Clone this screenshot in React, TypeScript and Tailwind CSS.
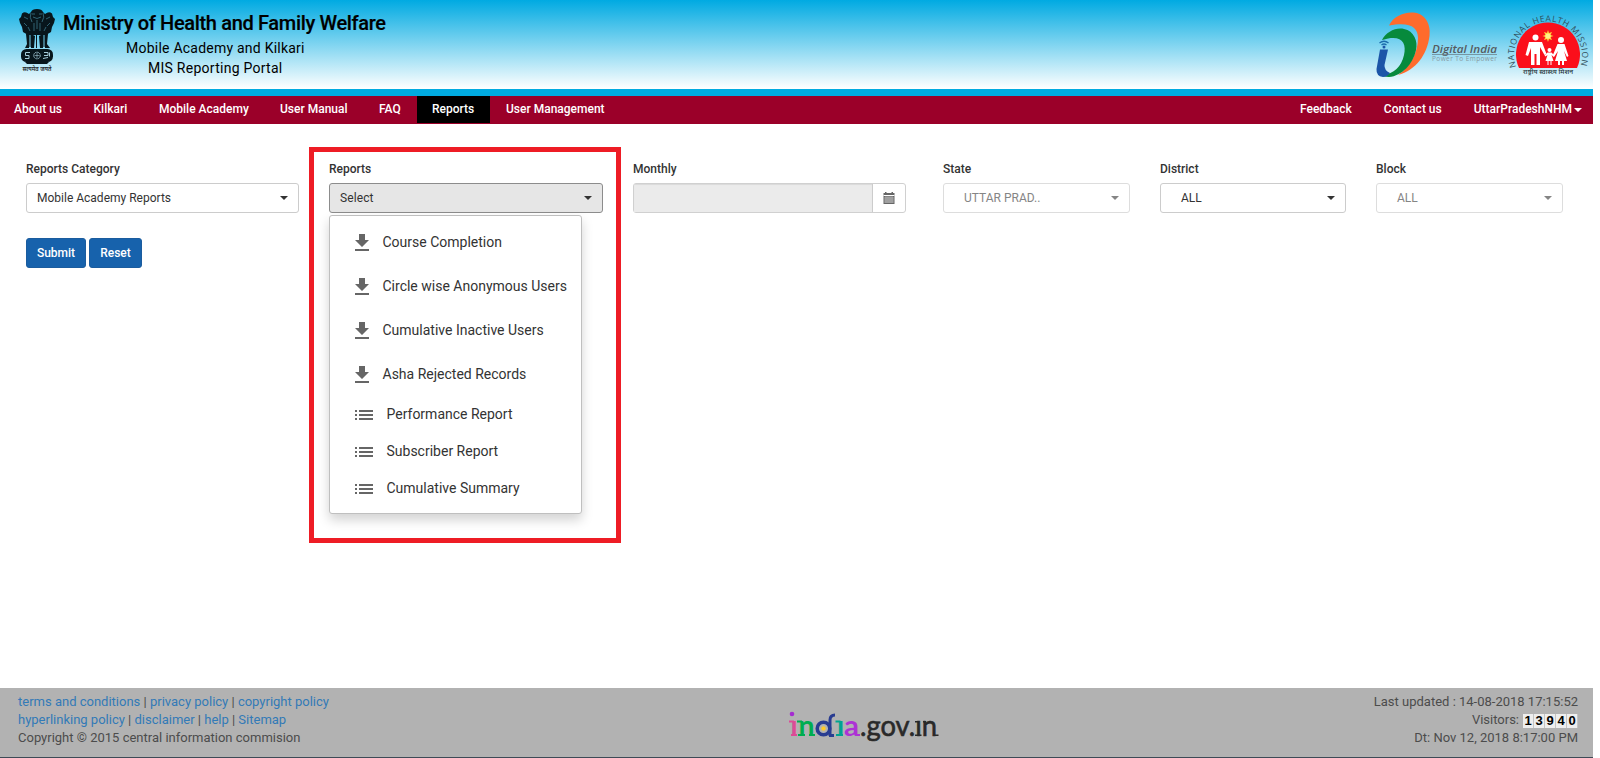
import React from "react";
import { MdGetApp, MdList } from "react-icons/md";

function Emblem() {
  return (
    <svg width="38" height="66" viewBox="0 0 38 66" className="shrink-0">
      <g fill="#08161c">
        <path d="M13 3 Q14 0 19 0 Q24 0 25 3 L27 5 Q31 2 34 4.500 L35 8 L37 10 L36 14 L34 18 L33 23 L28 26 L10 26 L5 23 L4 18 L2 14 L1 10 L3 8 L4 4.500 Q7 2 11 5Z" />
        <path d="M8 25 L11 25 L11 39 L7 39 L9 35Z M13 25 L17 27 L16 39 L13 39Z M21 27 L25 25 L25 39 L22 39Z M27 25 L30 25 L29 35 L32 39 L27 39Z" />
        <rect x="3" y="40" width="32" height="13" rx="5.500" />
        <path d="M7 53h24l-2 2H9z" />
      </g>
      <path d="M18.500 26v13M12 26v12M26 26v12" stroke="#08161c" strokeWidth="1" />
      <g stroke="#4d97ae" strokeWidth="0.600" fill="none">
        <path d="M14 5h3M21 5h3M15 8q4 3 8 0M13 4q-2 4 1 9M25 4q2 4-1 9M6 8l4 2M32 8l-4 2M6 14l3 3M32 14l-3 3M10 18l2 4M28 18l-2 4M16 14v8M22 14v8M19 11v9" />
      </g>
      <g stroke="#a5cbd8" strokeWidth="1" fill="none">
        <circle cx="19" cy="46.500" r="3.300" strokeDasharray="1.500 0.700" />
        <path d="M12 43.500H7.500v3H11v3H7M26 43.500h4v3h-4M25 49.500l5-1M31.500 43.500v4" />
        <path d="M19 44v5M16.500 46.500h5" strokeWidth="0.600" />
      </g>
      <text x="19" y="62" textAnchor="middle" textLength="29" lengthAdjust="spacingAndGlyphs" fontSize="6" fontWeight="600" fill="#1c2529" fontFamily="Noto Sans, sans-serif">सत्यमेव जयते</text>
    </svg>
  );
}

function DigitalIndia() {
  return (
    <svg width="124" height="68" viewBox="0 0 124 68" className="shrink-0">
      <path d="M13 13.500 C17 5 27 0 37 0.500 C50 1.500 55 13 53.500 24 C51 43 40 58 22 63 C35 54 42 40 42 26 C42 15 34 9.500 13 13.500Z" fill="#ff6b2c" />
      <path d="M6 28 C10 20 20 15 28 17 C38 19 42 29 40 38 C37 52 26 64 13 65 Q7 65 3 62 C16 64 25 56 28 43 C31 30 25 22 6 28Z" fill="#078a3c" />
      <path d="M4 37.500 H12 L8.500 53 Q8 58 14 61 Q11 65 7 65 Q0 64 0.500 57Z" fill="#1b55a8" />
      <circle cx="8" cy="35" r="1.500" fill="#1b55a8" />
      <path d="M5.500 33 Q8 31 10.500 33 M3.500 31 Q8 27.500 12.500 31" fill="none" stroke="#1b6cac" strokeWidth="1.300" />
      <text x="56" y="41" textLength="65" lengthAdjust="spacingAndGlyphs" fontFamily="Open Sans, sans-serif" fontSize="11.500" fontWeight="600" fontStyle="italic" fill="#555b60">Digital India</text>
      <path d="M56 42.500h65" stroke="#65777f" strokeWidth="0.700" />
      <text x="56" y="49" textLength="65" fontFamily="Open Sans, sans-serif" fontSize="6.500" fill="#8799a1">Power To Empower</text>
    </svg>
  );
}

function HealthMission() {
  return (
    <svg width="90" height="68" viewBox="-4 -4 90 68" className="shrink-0 overflow-visible">
      <defs>
        <path id="arc" d="M9 54 A34 34 0 1 1 73 54" />
      </defs>
      <text fontFamily="Open Sans, sans-serif" fontSize="8.500" fill="#2f4d59">
        <textPath href="#arc" textLength="128">NATIONAL HEALTH MISSION</textPath>
      </text>
      <path d="M12 55 A32 32 0 1 1 70 55Z" fill="#fb0f1b" />
      <path d="M41 17l1 3 3-1-1.500 3 3 1-3 1 1.500 3-3-1-1 3-1-3-3 1 1.500-3-3-1 3-1-1.500-3 3 1z" fill="#ffd83c" />
      <circle cx="41" cy="23" r="2.600" fill="#fff08a" />
      <g fill="#fff">
        <circle cx="28.500" cy="24.500" r="3" />
        <path d="M22 29h13l4.500 12-2 1-4.500-8V52h-3.500V41h-2v11H24V35l-3 8-2.500-1z" />
        <circle cx="54" cy="27" r="3" />
        <path d="M50.500 31h7l4 12-1.500 1-3-6 3 10h-3v4h-2v-4h-2v4h-2v-4h-3l3-10-4 6-1.500-1z" />
        <circle cx="42.500" cy="37" r="2" />
        <path d="M40.500 39.500h4l3 3-1 1-2-1.500 2 6h-2v4h-1v-4h-2v4h-1v-4h-2l2-6-2 1.500-1-1z" />
      </g>
      <text x="41" y="61" textAnchor="middle" textLength="50" lengthAdjust="spacingAndGlyphs" fontFamily="Noto Sans, sans-serif" fontSize="5.500" fontWeight="500" fill="#25343a">राष्ट्रीय स्वास्थ्य मिशन</text>
    </svg>
  );
}

function IndiaGov() {
  return (
    <svg width="158" height="50" viewBox="0 -10 158 50" className="mt-[9px] shrink-0 overflow-visible">
      <g fontFamily="Lato, sans-serif" fontSize="28" fontWeight="700">
        <text x="3.500" y="24" fill="#dc4b96">ı</text>
        <text x="11.500" y="24" textLength="16" lengthAdjust="spacingAndGlyphs" fill="#00ad50">n</text>
        <text x="50" y="24" fill="#00a490">ı</text>
        <text x="57" y="24" textLength="15" lengthAdjust="spacingAndGlyphs" fill="#ad32d5">a</text>
      </g>
      <text x="73" y="24" textLength="77" lengthAdjust="spacingAndGlyphs" fontFamily="Lato, sans-serif" fontSize="29" fill="#292929" stroke="#292929" strokeWidth="0.600">.gov.ın</text>
      <path d="M10 9.500h5M11 23h7M22 23h6" stroke="#00ad50" strokeWidth="2" />
      <path d="M2 9.500h5M4 23h6" stroke="#dc4b96" strokeWidth="2" />
      <path d="M49 23h7M48.500 9.500h5" stroke="#00a490" strokeWidth="2" />
      <path d="M69 23h4" stroke="#ad32d5" strokeWidth="2" />
      <path d="M128 9.700h4M128 23.300h6.500M136 9.700h3M147 23.300h4.500" stroke="#292929" strokeWidth="1.500" />
      <circle cx="5" cy="2" r="2.300" fill="#a52bd1" />
      <circle cx="36.500" cy="16.500" r="6.300" fill="none" stroke="#293c91" strokeWidth="3.500" />
      <path d="M43 24V8Q43 3 48 3M42 23.500h5" fill="none" stroke="#293c91" strokeWidth="3" />
      <circle cx="36.500" cy="16.500" r="2.200" fill="#ffc928" />
    </svg>
  );
}

function Caret({ className = "" }: { className?: string }) {
  return <span className={`inline-block border-x-4 border-t-4 border-x-transparent border-t-current ${className}`} />;
}

function Field({ label, width, children }: { label: string; width: string; children: React.ReactNode }) {
  return (
    <div className={`relative ${width}`}>
      <div className="h-[21px] pt-px text-xs leading-3 font-medium text-[#333]">{label}</div>
      {children}
    </div>
  );
}

function SelectBox({ text, className }: { text: string; className: string }) {
  return (
    <button className={`flex h-[30px] w-full items-center justify-between rounded-[3px] border pr-[10px] text-xs ${className}`}>
      <span>{text}</span>
      <Caret />
    </button>
  );
}

const leftNav = [
  ["About us", "w-[77px] pl-[14px]"],
  ["Kilkari", "w-[66px] pl-[16.500px]"],
  ["Mobile Academy", "w-[121px] pl-4"],
  ["User Manual", "w-[99px] pl-4"],
  ["FAQ", "w-[54px] pl-4"],
  ["Reports", "w-[73px] pl-[15px] bg-black"],
  ["User Management", "pl-4"],
];

const downloads = ["Course Completion", "Circle wise Anonymous Users", "Cumulative Inactive Users", "Asha Rejected Records"];
const lists = ["Performance Report", "Subscriber Report", "Cumulative Summary"];

export default function App() {
  return (
    <div className="h-[758px] w-[1600px] overflow-hidden bg-white font-['Roboto',sans-serif] text-[#333]">
      <div className="flex h-full w-[1593px] flex-col">
        <header className="flex h-24 items-start border-b-[7px] border-[#00abe1] bg-linear-to-b/srgb from-[#00aae2] to-white bg-clip-padding pl-[18px]">
          <div className="pt-[9px]">
            <Emblem />
          </div>
          <div className="ml-[7px] w-[340px] pt-[10px] whitespace-nowrap text-black">
            <h1 className="text-[20px] leading-[26px] font-medium tracking-[-0.34px] [-webkit-text-stroke:0.2px_black]">Ministry of Health and Family Welfare</h1>
            <div className="mt-[2px] pl-[63px] text-[14px] leading-5 tracking-[0.23px]">Mobile Academy and Kilkari</div>
            <div className="pl-[85px] text-[14px] leading-[21px] tracking-[0.26px]">MIS Reporting Portal</div>
          </div>
          <div className="ml-auto flex">
            <div className="pt-[12px]">
              <DigitalIndia />
            </div>
            <div className="ml-[3px] pt-[9px]">
              <HealthMission />
            </div>
          </div>
        </header>

        <nav className="flex h-7 bg-[#9b0029] text-xs font-medium text-white">
          {leftNav.map(([t, c]) => (
            <a key={t} className={`h-[27px] leading-[26px] whitespace-nowrap ${c}`}>
              {t}
            </a>
          ))}
          <div className="ml-auto flex gap-8 pr-[11px] leading-[26px]">
            <a>Feedback</a>
            <a>Contact us</a>
            <a className="flex h-[26px] items-center">
              UttarPradeshNHM
              <Caret className="mt-[2px] ml-[2px]" />
            </a>
          </div>
        </nav>

        <main className="flex-1 pt-[38px] pl-[26px]">
          <div className="flex">
            <Field label="Reports Category" width="w-[273px]">
              <SelectBox text="Mobile Academy Reports" className="border-[#ccc] pl-[10px]" />
            </Field>
            <div className="w-[30px]" />
            <Field label="Reports" width="w-[274px]">
              <SelectBox text="Select" className="border-[#8c8c8c] bg-[#e6e6e6] pl-[10px] tracking-[0.1px]" />
              <div className="absolute top-[53px] left-0 h-[299px] w-[253px] rounded-[3px] border border-[#bfbfbf] bg-white pt-[4px] text-[14px] shadow-[0_6px_12px_rgba(0,0,0,0.175)]">
                {downloads.map((t) => (
                  <div key={t} className="flex h-11 items-center pl-5">
                    <MdGetApp size={24} className="mt-[2px] mr-[8.500px] text-[#666]" />
                    {t}
                  </div>
                ))}
                {lists.map((t) => (
                  <div key={t} className="flex h-[37px] items-center pl-[22px]">
                    <MdList size={24} className="mt-px mr-[10.500px] text-[#666]" />
                    {t}
                  </div>
                ))}
              </div>
              <div className="pointer-events-none absolute -top-[15px] -left-[20px] h-[396px] w-[312px] border-5 border-[#ee1c25]" />
            </Field>
            <div className="w-[30px]" />
            <Field label="Monthly" width="w-[273px]">
              <div className="flex h-[30px] rounded-[3px] border border-[#d0d0d0]">
                <div className="w-[239px] border-r border-[#ccc] bg-[#ebebeb] shadow-[inset_0_1px_1px_rgba(0,0,0,0.075)]" />
                <div className="flex flex-1 items-center justify-center pr-px pb-px">
                  <svg width="12" height="12" viewBox="0 0 12 12">
                    <path d="M0.500 1h11v11h-11z M2 0h1.500v1H2z M8.500 0H10v1H8.500z" fill="#666" />
                    <path d="M0.500 3.500h11" stroke="#fff" strokeWidth="1" />
                    <path d="M1 6h10M1 8h10M1 10h10M3 4v7M5 4v7M7 4v7M9 4v7" stroke="#eee" strokeWidth="0.500" />
                  </svg>
                </div>
              </div>
            </Field>
            <div className="w-[37px]" />
            <Field label="State" width="w-[187px]">
              <SelectBox text="UTTAR PRAD.." className="border-[#ddd] pl-[20px] text-[#858585]" />
            </Field>
            <div className="w-[30px]" />
            <Field label="District" width="w-[186px]">
              <SelectBox text="ALL" className="border-[#ccc] pl-[20px]" />
            </Field>
            <div className="w-[30px]" />
            <Field label="Block" width="w-[187px]">
              <SelectBox text="ALL" className="border-[#ddd] pl-[20px] text-[#858585]" />
            </Field>
          </div>
          <div className="mt-[25px] flex gap-[3px] text-xs font-medium text-white">
            <button className="h-[30px] w-[60px] rounded-[3px] border border-[#1b5c9e] bg-[#1762ac]">Submit</button>
            <button className="h-[30px] w-[53px] rounded-[3px] border border-[#1b5c9e] bg-[#1762ac]">Reset</button>
          </div>
        </main>

        <footer className="flex h-[70px] border-b border-[#3e4a56] bg-[#b2b2b2] pr-[15px] pl-[18px] pt-[5px] text-[13px] leading-[18px] text-[#4c4c4c]">
          <div className="w-[769px]">
            <div>
              <a className="text-[#337ab7]">terms and conditions</a> | <a className="text-[#337ab7]">privacy policy</a> | <a className="text-[#337ab7]">copyright policy</a>
            </div>
            <div>
              <a className="text-[#337ab7]">hyperlinking policy</a> | <a className="text-[#337ab7]">disclaimer</a> | <a className="text-[#337ab7]">help</a> | <a className="text-[#337ab7]">Sitemap</a>
            </div>
            <div>Copyright © 2015 central information commision</div>
          </div>
          <IndiaGov />
          <div className="ml-auto text-right">
            <div>Last updated : 14-08-2018 17:15:52</div>
            <div className="flex h-[18px] items-center justify-end">
              Visitors:
              <span className="mt-[2px] ml-[4px] flex font-['Liberation_Sans',sans-serif] text-[13px] leading-[14px] font-bold text-black">
                {"13940".split("").map((d, i) => (
                  <span key={i} className="w-[11px] border-r border-[#c4c4c4] bg-[#eee] text-center">
                    {d}
                  </span>
                ))}
              </span>
            </div>
            <div>Dt: Nov 12, 2018 8:17:00 PM</div>
          </div>
        </footer>
      </div>
    </div>
  );
}
